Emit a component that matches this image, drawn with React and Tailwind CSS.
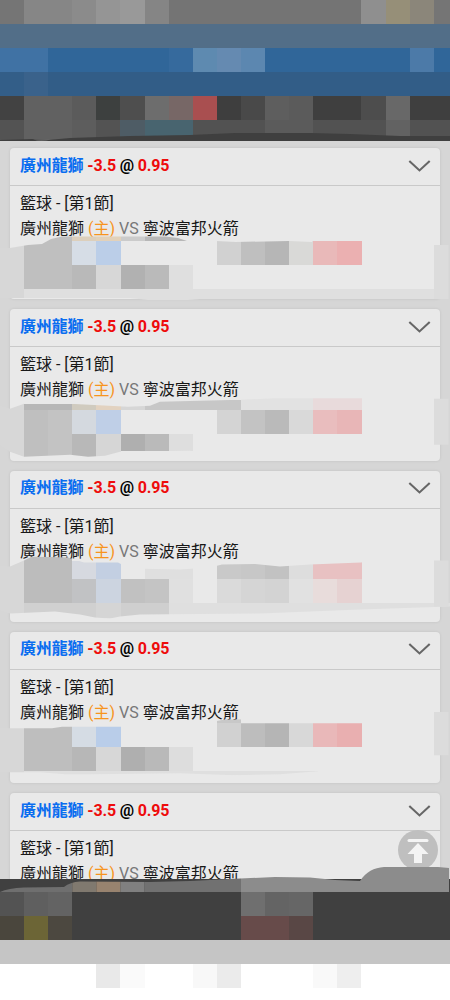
// width of one mosaic column
const COL = 24.1;

const HEADER_ROWS = [
  {
    height: 'h-6',
    cells: [
      [1, 'bg-[#757575]'], [2, 'bg-[#868686]'], [1, 'bg-[#8b8b8b]'], [1, 'bg-[#959595]'], [1, 'bg-[#999999]'],
      [1, 'bg-[#858585]'], [8, 'bg-[#747474]'], [1, 'bg-[#8f8f8f]'], [1, 'bg-[#968f78]'], [1, 'bg-[#8b867a]'], [1, 'bg-[#757575]'],
    ],
  },
  { height: 'h-6', cells: [[19, 'bg-[#526e88]']] },
  {
    height: 'h-6',
    cells: [
      [2, 'bg-[#4072a4]'], [5, 'bg-[#306699]'], [1, 'bg-[#366a9d]'], [1, 'bg-[#5e8ab0]'], [1, 'bg-[#658ab1]'],
      [1, 'bg-[#5c87b0]'], [6, 'bg-[#306699]'], [1, 'bg-[#4c7aa8]'], [1, 'bg-[#306699]'],
    ],
  },
  { height: 'h-6', cells: [[1, 'bg-[#335e88]'], [1, 'bg-[#3a628b]'], [17, 'bg-[#325d87]']] },
  {
    height: 'h-6',
    cells: [
      [1, 'bg-[#424242]'], [2, 'bg-[#616161]'], [1, 'bg-[#5b5b5b]'], [1, 'bg-[#3d403f]'], [1, 'bg-[#4e4e4e]'],
      [1, 'bg-[#6d6d6d]'], [1, 'bg-[#776766]'], [1, 'bg-[#a94f50]'], [1, 'bg-[#3e3e3e]'], [1, 'bg-[#494949]'],
      [1, 'bg-[#5e5e5e]'], [1, 'bg-[#5b5b5b]'], [2, 'bg-[#3f3f3f]'], [1, 'bg-[#4d4d4d]'], [1, 'bg-[#686868]'], [2, 'bg-[#3f3f3f]'],
    ],
  },
  {
    height: 'h-[21px]',
    cells: [
      [1, 'bg-[#535353]'], [2, 'bg-[#616161]'], [1, 'bg-[#5d5d5d]'], [1, 'bg-[#535353]'], [1, 'bg-[#4e5c65]'],
      [2, 'bg-[#48646f]'], [3, 'bg-[#525252]'], [2, 'bg-[#5b5b5b]'], [3, 'bg-[#525252]'], [1, 'bg-[#626262]'], [2, 'bg-[#525252]'],
    ],
  },
];

const FOOTER_ROWS = [
  {
    height: 'h-[13px]',
    cells: [[19, 'bg-[#404040]']],
  },
  {
    height: 'h-6',
    cells: [
      [1, 'bg-[#535353]'], [1, 'bg-[#5f5f5f]'], [1, 'bg-[#636363]'], [7, 'bg-[#404040]'],
      [1, 'bg-[#6f6f6f]'], [1, 'bg-[#646464]'], [1, 'bg-[#666666]'], [6, 'bg-[#404040]'],
    ],
  },
  {
    height: 'h-6',
    cells: [
      [1, 'bg-[#4a463d]'], [1, 'bg-[#6c6536]'], [1, 'bg-[#4c4840]'], [7, 'bg-[#404040]'],
      [2, 'bg-[#674b4a]'], [1, 'bg-[#594745]'], [6, 'bg-[#404040]'],
    ],
  },
  { height: 'h-6', cells: [[19, 'bg-[#c5c5c5]']] },
  {
    height: 'h-6',
    cells: [
      [4, 'bg-white'], [1, 'bg-[#e9e9e9]'], [1, 'bg-[#fafafa]'], [2, 'bg-white'], [1, 'bg-[#f8f8f8]'],
      [1, 'bg-[#ebebeb]'], [3, 'bg-white'], [1, 'bg-[#f9f9f9]'], [1, 'bg-[#eeeeee]'], [4, 'bg-white'],
    ],
  },
];

// cells: [first column, column count, y, height, colour], drawn inside the outline
const BETS = [
  {
    id: 1,
    y: 228,
    outline:
      'M0 248H10L28 245L42 244L51 239L62 236.5H165L178 238L187 241H216L236 242L289 241L312 242L313 240H450V299H200L188 300H148L130 298H0Z',
    cells: [
      [0, 1, 236, 64, '#d7d7d7'], [1, 2, 236, 53, '#bfbfbf'], [3, 1, 236, 5, '#dccfbc'], [4, 1, 236, 5, '#e2d1ba'],
      [5, 1, 236, 5, '#cbcbcb'], [6, 2, 236, 5, '#b7b7b7'],
      [3, 1, 241, 24, '#d6dde6'], [4, 1, 241, 24, '#bbcee8'], [9, 1, 241, 24, '#d1d1d1'], [10, 1, 241, 24, '#bfbfbf'],
      [11, 1, 241, 24, '#b6b6b6'], [12, 1, 241, 24, '#d9d9d7'], [13, 1, 241, 24, '#e9b9b9'], [14, 1, 241, 24, '#ebb0b1'],
      [3, 1, 265, 24, '#b9b9b9'], [4, 1, 265, 24, '#d7d7d7'], [5, 1, 265, 24, '#b1b1b1'], [6, 1, 265, 24, '#bababa'],
      [7, 1, 265, 24, '#dfdfdf'], [1, 17, 289, 11, '#dfdfdf'],
    ],
    edge: [245, 54],
  },
  {
    id: 2,
    y: 389.25,
    outline:
      'M0 406L10 409L24 404L70 404L128 407L150 406L160 402L240 400L275 398.5H450V460H200L190 451L120 452L105 456L88 457L70 455L24 457L10 452L0 445Z',
    cells: [
      [0, 1, 400, 58, '#d7d7d7'], [1, 2, 404, 6, '#b7b7b7'], [3, 1, 404, 6, '#d0cbbf'], [4, 1, 404, 6, '#e2d2c0'],
      [5, 1, 404, 6, '#d6d6d6'], [6, 4, 400, 10, '#c7c7c7'], [10, 3, 398, 12, '#e2e2e2'], [13, 2, 398, 12, '#e8dadb'],
      [1, 1, 410, 47, '#bfbfbf'], [2, 1, 410, 47, '#c3c3c3'], [3, 1, 410, 24, '#d4d9df'], [4, 1, 410, 24, '#bfcfe7'],
      [9, 1, 410, 24, '#d4d4d4'], [10, 1, 410, 24, '#c3c3c3'], [11, 1, 410, 24, '#bababa'], [12, 1, 410, 24, '#d9d9d9'],
      [13, 1, 410, 24, '#e9bdbe'], [14, 1, 410, 24, '#e8b6b7'],
      [3, 1, 434, 24, '#b8b8b8'], [4, 1, 434, 24, '#d6d6d6'], [5, 1, 434, 17, '#afafaf'], [6, 1, 434, 17, '#bababa'], [7, 1, 434, 17, '#dedede'],
    ],
    edge: [399, 46],
  },
  {
    id: 3,
    y: 550.5,
    outline:
      'M0 566L10 566L24 560L32 556L68 557L84 562L118 562L130 568L180 569L210 567L222 564L255 563.5L280 566L310 564L361 562L374 560H450V606L360 609L260 613L140 614L120 616L110 618L95 617L80 614L55 611L10 613L0 610Z',
    cells: [
      [0, 1, 555, 60, '#d7d7d7'], [1, 2, 555, 48, '#bcbcbc'], [3, 1, 560, 18, '#d6d9e0'], [4, 1, 560, 18, '#c3cfe2'],
      [6, 2, 566, 12, '#dfdfdf'], [9, 1, 560, 18, '#c9c9c9'], [10, 1, 560, 18, '#c7c7c7'], [11, 1, 560, 18, '#c2c2c2'],
      [12, 1, 560, 18, '#dddddd'], [13, 2, 560, 18, '#e8c1c2'],
      [3, 1, 578, 24, '#c1c2c4'], [4, 1, 578, 24, '#ccd4e0'], [5, 1, 578, 24, '#c1c1c1'], [6, 1, 578, 24, '#c4c4c4'],
      [7, 1, 578, 24, '#e0e0e0'], [9, 1, 578, 24, '#dadada'], [10, 1, 578, 24, '#d5d5d5'], [11, 1, 578, 24, '#d3d3d3'],
      [12, 1, 578, 24, '#e1e1e1'], [13, 1, 578, 24, '#e8dcdb'], [14, 1, 578, 24, '#e6d2d2'],
      [1, 3, 602, 18, '#d0d0d0'], [4, 1, 602, 18, '#d5d5d5'], [5, 2, 602, 14, '#cfcfcf'], [7, 12, 602, 14, '#dfdfdf'],
    ],
    edge: [560, 46],
  },
  {
    id: 4,
    y: 711.75,
    outline:
      'M0 728H52L62 726.5H120L210 722L226 719H241V723H450V765L350 763L318 771L280 774L235 775L180 773L90 774L65 774L40 772H0Z',
    cells: [
      [0, 1, 720, 54, '#d7d7d7'], [1, 2, 726, 45, '#bebebe'], [3, 1, 726, 21, '#d5dce4'], [4, 1, 726, 21, '#b9cde9'],
      [9, 1, 719, 4, '#c8c8c8'], [9, 1, 723, 24, '#d1d1d1'], [10, 1, 723, 24, '#bdbdbd'], [11, 1, 723, 24, '#b5b5b5'],
      [12, 1, 723, 24, '#d8d8d8'], [13, 1, 723, 24, '#e9b8b9'], [14, 1, 723, 24, '#e9afb0'],
      [3, 1, 747, 24, '#b7b7b7'], [4, 1, 747, 24, '#d7d7d7'], [5, 1, 747, 24, '#afafaf'], [6, 1, 747, 24, '#b9b9b9'],
      [7, 1, 747, 24, '#dddddd'], [1, 12.2, 771, 5, '#dfdfdf'],
    ],
    edge: [707, 48],
  },
  { id: 5 },
];

function Mosaic({ rows }) {
  return rows.map((row, i) => (
    <div key={i} className={`flex w-full overflow-hidden shrink-0 ${row.height}`}>
      {row.cells.map(([span, color], j) => (
        <div key={j} className={`shrink-0 ${color}`} style={{ width: span * COL }} />
      ))}
    </div>
  ));
}

function Smudge({ bet }) {
  return (
    <svg
      aria-hidden="true"
      className="absolute -left-2.5 top-20 w-[450px] h-20 pointer-events-none"
      viewBox={`0 ${bet.y} 450 80`}
    >
      <defs>
        <clipPath id={`smudge-${bet.id}`}>
          <path d={bet.outline} />
        </clipPath>
      </defs>
      <g clipPath={`url(#smudge-${bet.id})`} shapeRendering="crispEdges">
        {bet.cells.map(([c, n, y, h, fill], i) => (
          <rect key={i} x={c * COL} y={y} width={n * COL} height={h} fill={fill} />
        ))}
      </g>
      <rect x="434" y={bet.edge[0]} width="14.5" height={bet.edge[1]} fill="#dcdcdc" />
    </svg>
  );
}

function BetCard({ bet }) {
  return (
    <article className="relative h-[151.25px] shrink-0 rounded bg-[#e9e9e9] shadow-[0_0_3px_rgba(0,0,0,0.1)]">
      <header className="flex h-[38px] items-center justify-between border-b border-[#c9c9c9] pl-2.5 pr-[9px]">
        <h2 className="pb-0.5 text-base font-bold leading-[34px] tracking-[-0.15px] text-black">
          <span className="text-[#0a6df0]">廣州龍獅</span> <span className="text-[#ee0c0c]">-3.5</span> @{' '}
          <span className="text-[#ee0c0c]">0.95</span>
        </h2>
        <svg className="mb-0.5 h-3 w-[23px]" viewBox="0 0 23 12" fill="none" stroke="#666" strokeWidth="2.1">
          <path d="M1.3 1L11.5 10.4L21.7 1" />
        </svg>
      </header>
      <div className="px-2.5 pt-[5px] text-base leading-[25px] text-[#181818]">
        <p>籃球 - [第1節]</p>
        <p>
          廣州龍獅 <span className="text-[#f7941d]">(主)</span> <span className="text-[#777]">VS</span> 寧波富邦火箭
        </p>
      </div>
      {bet.edge && <Smudge bet={bet} />}
    </article>
  );
}

export default function App() {
  return (
    <div className="relative flex h-[1000px] w-[450px] flex-col overflow-hidden bg-white font-['Roboto','Noto_Sans_CJK_TC',sans-serif]">
      <header className="relative flex h-[141px] shrink-0 flex-col">
        <Mosaic rows={HEADER_ROWS} />
        <svg className="absolute bottom-0 left-0 h-3 w-full" viewBox="0 129 450 12">
          <path d="M0 140L32 139L48 140L70 138L130 136L190 135L235 133H310L350 134L400 136L450 136V141H0Z" fill="#3f3f3f" />
          <path d="M33 139.5Q41 142 51 139.5Z" fill="#6b6b6b" />
        </svg>
      </header>

      <main className="flex h-[738px] shrink-0 flex-col gap-2.5 overflow-hidden bg-[#d6d6d6] px-2.5 pt-[7px]">
        {BETS.map((bet) => (
          <BetCard key={bet.id} bet={bet} />
        ))}
      </main>

      <button
        type="button"
        aria-label="Back to top"
        className="absolute left-[397.5px] top-[830px] size-10 rounded-full bg-[#bfbfbf]"
      >
        <svg viewBox="0 0 40 40" className="size-10" fill="#f4f4f4">
          <rect x="9.5" y="9" width="21" height="3" rx="1.5" />
          <path d="M20 13L30.5 24H24V33H16V24H9.5Z" />
        </svg>
      </button>

      <footer className="relative flex shrink-0 flex-col">
        <Mosaic rows={FOOTER_ROWS} />
        <svg className="absolute -top-3 left-0 h-[25px] w-full" viewBox="0 867 450 25">
          <defs>
            <clipPath id="footer-wave">
              <path d="M0 892Q8 888 24 887.5L64 887Q70 882 80 881.5L150 882L190 881L230 879L275 877L310 877.5L335 880L360 881C366 872 374 867.5 384 867H438L449 868V892Z" />
            </clipPath>
          </defs>
          <g clipPath="url(#footer-wave)">
            <rect y="867" width="72.3" height="25" fill="#6f6f6f" />
            <rect x="72.3" y="867" width="24.1" height="25" fill="#80796f" />
            <rect x="96.4" y="867" width="24.1" height="25" fill="#98836f" />
            <rect x="120.5" y="867" width="24.1" height="25" fill="#808080" />
            <rect x="144.6" y="867" width="96.4" height="25" fill="#717171" />
            <rect x="241" y="867" width="209" height="25" fill="#8c8c8c" />
          </g>
        </svg>
      </footer>
    </div>
  );
}
